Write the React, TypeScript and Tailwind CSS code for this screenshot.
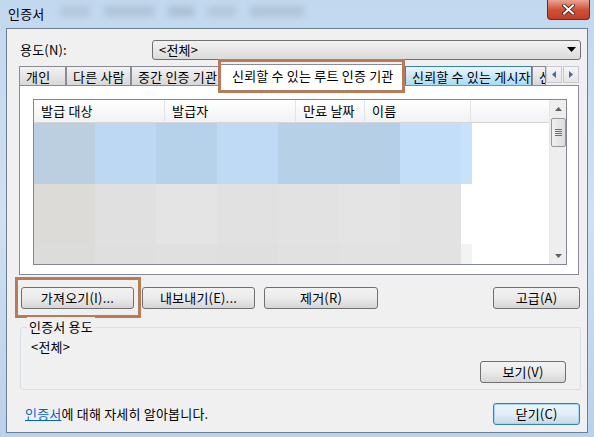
import React from 'react';

const FONT = { fontFamily: '"Noto Sans CJK KR", "Noto Sans", sans-serif' };

const blue = ['#bccfe0', '#bdd8f2', '#b6d1ea', '#bedaf4', '#b6d0e8', '#b5cfe7', '#c3def8', '#c7e2fb'];
const grayA = ['#dcdbd8', '#e0e0e0', '#e4e4e4', '#e1e1e1', '#e2e2e2', '#e4e4e4', '#e2e2e2'];
const grayB = ['#dcdcdb', '#dfdfdf', '#e0e0e0', '#dfdfdf', '#e0e1e0', '#e2e2e2', '#e1e2e1', '#f2f3f3'];

function Btn({ label, className = '' }: { label: string; className?: string }) {
  return (
    <div
      className={`h-[22px] flex items-center justify-center rounded-[3px] border border-[#707070] bg-gradient-to-b from-[#f2f2f2] via-[#ebebeb] to-[#d6d6d6] text-black ${className}`}
    >
      {label}
    </div>
  );
}

function Tab({ label, w, hover = false }: { label: string; w: string; hover?: boolean }) {
  return (
    <div
      className={`h-[19px] ${w} shrink-0 flex items-center pl-[6px] pt-[1px] border border-b-0 leading-none whitespace-nowrap overflow-hidden ${
        hover
          ? 'border-[#3c7fb1] bg-gradient-to-b from-[#eaf6fd] to-[#a9dbf6]'
          : 'border-[#898c95] bg-gradient-to-b from-[#f3f3f3] to-[#d8d8d8]'
      }`}
    >
      {label}
    </div>
  );
}

export default function App() {
  return (
    <div
      className="w-[594px] h-[437px] overflow-hidden flex flex-col bg-gradient-to-b from-[#c2d8ee] via-[#cfe1f3] to-[#b9d1ea]"
      style={FONT}
    >
      {/* title bar */}
      <div className="h-[28px] shrink-0 flex items-start relative">
        <span className="ml-[8px] mt-[4px] text-[13px] tracking-[0.2px] text-black">인증서</span>
        <div className="absolute left-[60px] top-[6px] flex gap-[14px] opacity-25 blur-[3px]">
          <div className="w-[30px] h-[11px] bg-[#8a98a8]" />
          <div className="w-[50px] h-[11px] bg-[#7d8b9b]" />
          <div className="w-[26px] h-[11px] bg-[#6f7d8d]" />
          <div className="w-[28px] h-[11px] bg-[#8a98a8]" />
          <div className="w-[54px] h-[11px] bg-[#7d8b9b]" />
        </div>
        <div className="ml-auto mr-[4px] w-[43px] h-[20px] rounded-b-[4px] border border-t-0 border-[#6b2a22] bg-gradient-to-b from-[#e8a493] via-[#d0523a] to-[#c23d24] flex items-center justify-center">
          <svg width="13" height="11" viewBox="0 0 13 11">
            <path d="M2 1.5 L11 9.5 M11 1.5 L2 9.5" stroke="#3d1a14" strokeWidth="3.6" strokeLinecap="square" />
            <path d="M2 1.5 L11 9.5 M11 1.5 L2 9.5" stroke="#ffffff" strokeWidth="2" strokeLinecap="square" />
          </svg>
        </div>
      </div>

      {/* client area */}
      <div className="ml-[6px] w-[582px] h-[405px] border border-[#6f7f93] bg-[#f0f0f0] flex flex-col text-[13px] tracking-[0.2px] text-black">
        {/* purpose row */}
        <div className="mt-[11px] h-[19px] flex items-center">
          <span className="pl-[13px] w-[145px] shrink-0">용도(N):</span>
          <div className="flex-1 mr-[6px] h-[20px] rounded-[3px] border border-[#707070] bg-gradient-to-b from-[#f2f2f2] to-[#dcdcdc] flex items-center pl-[6px]">
            <span>&lt;전체&gt;</span>
            <svg className="ml-auto mr-[4px]" width="9" height="5" viewBox="0 0 9 5">
              <path d="M0 0 H9 L4.5 5 Z" fill="#000" />
            </svg>
          </div>
        </div>

        {/* tabs */}
        <div className="mt-[7px] ml-[12px] h-[19px] flex items-end relative">
          <Tab label="개인" w="w-[47px]" />
          <Tab label="다른 사람" w="w-[65px]" />
          <Tab label="중간 인증 기관" w="w-[88px]" />
          <div className="relative shrink-0 w-[186px] h-[22px] -mb-px bg-white border border-b-0 border-[#898c95] flex items-center pl-[12px] z-10 whitespace-nowrap">
            신뢰할 수 있는 루트 인증 기관
            <div className="absolute -left-[2px] -right-[1px] -top-[6px] -bottom-[7px] border-[3px] border-[#b97a57]" />
          </div>
          <Tab label="신뢰할 수 있는 게시자" w="w-[127px]" hover />
          <Tab label="신" w="w-[14px]" />
          <div className="absolute right-[8px] top-0 flex gap-[1px] z-20">
            {[0, 1].map((i) => (
              <div
                key={i}
                className="w-[16px] h-[17px] border border-[#c7cbd1] bg-gradient-to-b from-[#f5f5f5] to-[#e6e6e6] flex items-center justify-center"
              >
                <svg width="4" height="7" viewBox="0 0 4 7">
                  <path d={i === 0 ? 'M4 0 V7 L0 3.5 Z' : 'M0 0 V7 L4 3.5 Z'} fill="#4d6a96" />
                </svg>
              </div>
            ))}
          </div>
        </div>

        {/* tab panel */}
        <div className="ml-[12px] w-[560px] h-[190px] border border-[#898c95] bg-white pl-[13px] pt-[13px]">
          <div className="w-[534px] h-[166px] border border-[#828790] flex overflow-hidden">
            <div className="flex-1 flex flex-col">
              <div className="h-[23px] shrink-0 flex bg-gradient-to-b from-white to-[#f1f2f4] border-b border-[#d5d5d5]">
                {[
                  ['발급 대상', 'w-[131px]'],
                  ['발급자', 'w-[131px]'],
                  ['만료 날짜', 'w-[69px]'],
                  ['이름', 'w-[106px]'],
                ].map(([t, w]) => (
                  <div key={t} className={`${w} shrink-0 pl-[7px] flex items-center border-r border-[#e3e4e6]`}>
                    {t}
                  </div>
                ))}
              </div>
              <div className="flex h-[62px]">
                {blue.map((c, i) => (
                  <div key={i} className={i === 7 ? 'w-[11px]' : 'w-[61px]'} style={{ backgroundColor: c }} />
                ))}
              </div>
              <div className="flex h-[61px]">
                {grayA.map((c, i) => (
                  <div key={i} className="w-[61px]" style={{ backgroundColor: c }} />
                ))}
              </div>
              <div className="flex h-[20px]">
                {grayB.map((c, i) => (
                  <div key={i} className={i === 7 ? 'w-[11px]' : 'w-[61px]'} style={{ backgroundColor: c }} />
                ))}
              </div>
            </div>
            {/* scrollbar */}
            <div className="w-[17px] shrink-0 bg-[#eeeeee] border-l border-[#e6e6e6] flex flex-col items-center">
              <div className="h-[17px] w-full flex items-center justify-center">
                <svg width="7" height="4" viewBox="0 0 7 4">
                  <path d="M0 4 H7 L3.5 0 Z" fill="#606060" />
                </svg>
              </div>
              <div className="mt-[1px] w-[15px] h-[29px] rounded-[2px] border border-[#979797] bg-gradient-to-r from-[#f0f0f0] to-[#dcdcdc] flex flex-col items-center justify-center gap-[1px]">
                <div className="w-[7px] h-px bg-[#6d6d6d]" />
                <div className="w-[7px] h-px bg-[#6d6d6d]" />
                <div className="w-[7px] h-px bg-[#6d6d6d]" />
                <div className="w-[7px] h-px bg-[#6d6d6d]" />
              </div>
              <div className="mt-auto h-[17px] w-full flex items-center justify-center">
                <svg width="7" height="4" viewBox="0 0 7 4">
                  <path d="M0 0 H7 L3.5 4 Z" fill="#606060" />
                </svg>
              </div>
            </div>
          </div>
        </div>

        {/* action buttons */}
        <div className="mt-[12px] flex items-center">
          <div className="relative ml-[14px]">
            <Btn label="가져오기(I)..." className="w-[113px]" />
            <div className="absolute -left-[6px] -right-[7px] -top-[10px] -bottom-[9px] border-[3px] border-[#b97a57]" />
          </div>
          <Btn label="내보내기(E)..." className="ml-[8px] w-[113px]" />
          <Btn label="제거(R)" className="ml-[9px] w-[114px]" />
          <Btn label="고급(A)" className="ml-auto mr-[7px] w-[87px]" />
        </div>

        {/* purposes group */}
        <div className="mt-[18px] ml-[13px] mr-[6px] h-[63px] border border-[#d5dfe5] rounded-[3px] relative pl-[10px] pr-[14px]">
          <span className="absolute left-[6px] -top-[11px] bg-[#f0f0f0] px-[2px]">인증서 용도</span>
          <div className="mt-[9px]">&lt;전체&gt;</div>
          <div className="flex justify-end mt-[4px]">
            <Btn label="보기(V)" className="w-[86px]" />
          </div>
        </div>

        {/* footer */}
        <div className="mt-[13px] flex items-center">
          <span className="ml-[18px]">
            <span className="text-[#0066cc] underline">인증서</span>에 대해 자세히 알아봅니다.
          </span>
          <div className="ml-auto mr-[7px] w-[87px] h-[22px] rounded-[3px] border border-[#3c7fb1] bg-gradient-to-b from-[#eaf6fd] via-[#e1eef7] to-[#c4d9e6] shadow-[inset_0_0_0_1px_#a6d6f2] flex items-center justify-center">
            닫기(C)
          </div>
        </div>
      </div>
    </div>
  );
}
